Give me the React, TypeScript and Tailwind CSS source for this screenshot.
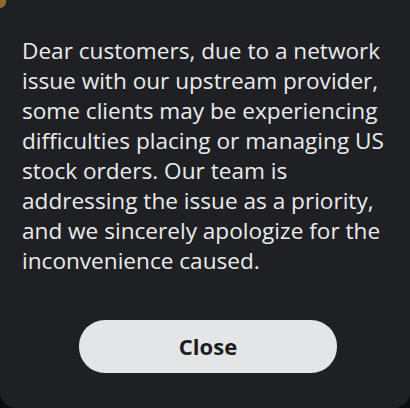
import React from 'react';

const App: React.FC = () => {
  return (
    <div className="w-[410px] h-[408px] bg-[#0b0c0d] overflow-hidden relative">
      <div className="h-[408px] bg-[#1f2023] rounded-b-[16px] flex flex-col pl-[22px] pr-[18px] pt-[36px]">
        {/* Message body */}
        <p className="text-[22.6px] leading-[30px] text-[#ebebed] font-['Open_Sans',sans-serif]">
          Dear customers, due to a network issue with our upstream provider, some clients may be experiencing difficulties placing or managing US stock orders. Our team is addressing the issue as a priority, and we sincerely apologize for the inconvenience caused.
        </p>
        <div className="flex justify-center mt-[44px] pl-[2px]">
          <button className="w-[258px] h-[53px] rounded-[26px] bg-[#e4e5e7] text-[#1b1c1e] text-[22px] font-bold font-['Open_Sans',sans-serif]">
            Close
          </button>
        </div>
      </div>
      {/* edge of the icon above */}
      <div className="absolute -left-[6px] -top-[6px] w-[12px] h-[14px] rounded-full bg-[#8a6d2e]" />
    </div>
  );
};

export default App;
